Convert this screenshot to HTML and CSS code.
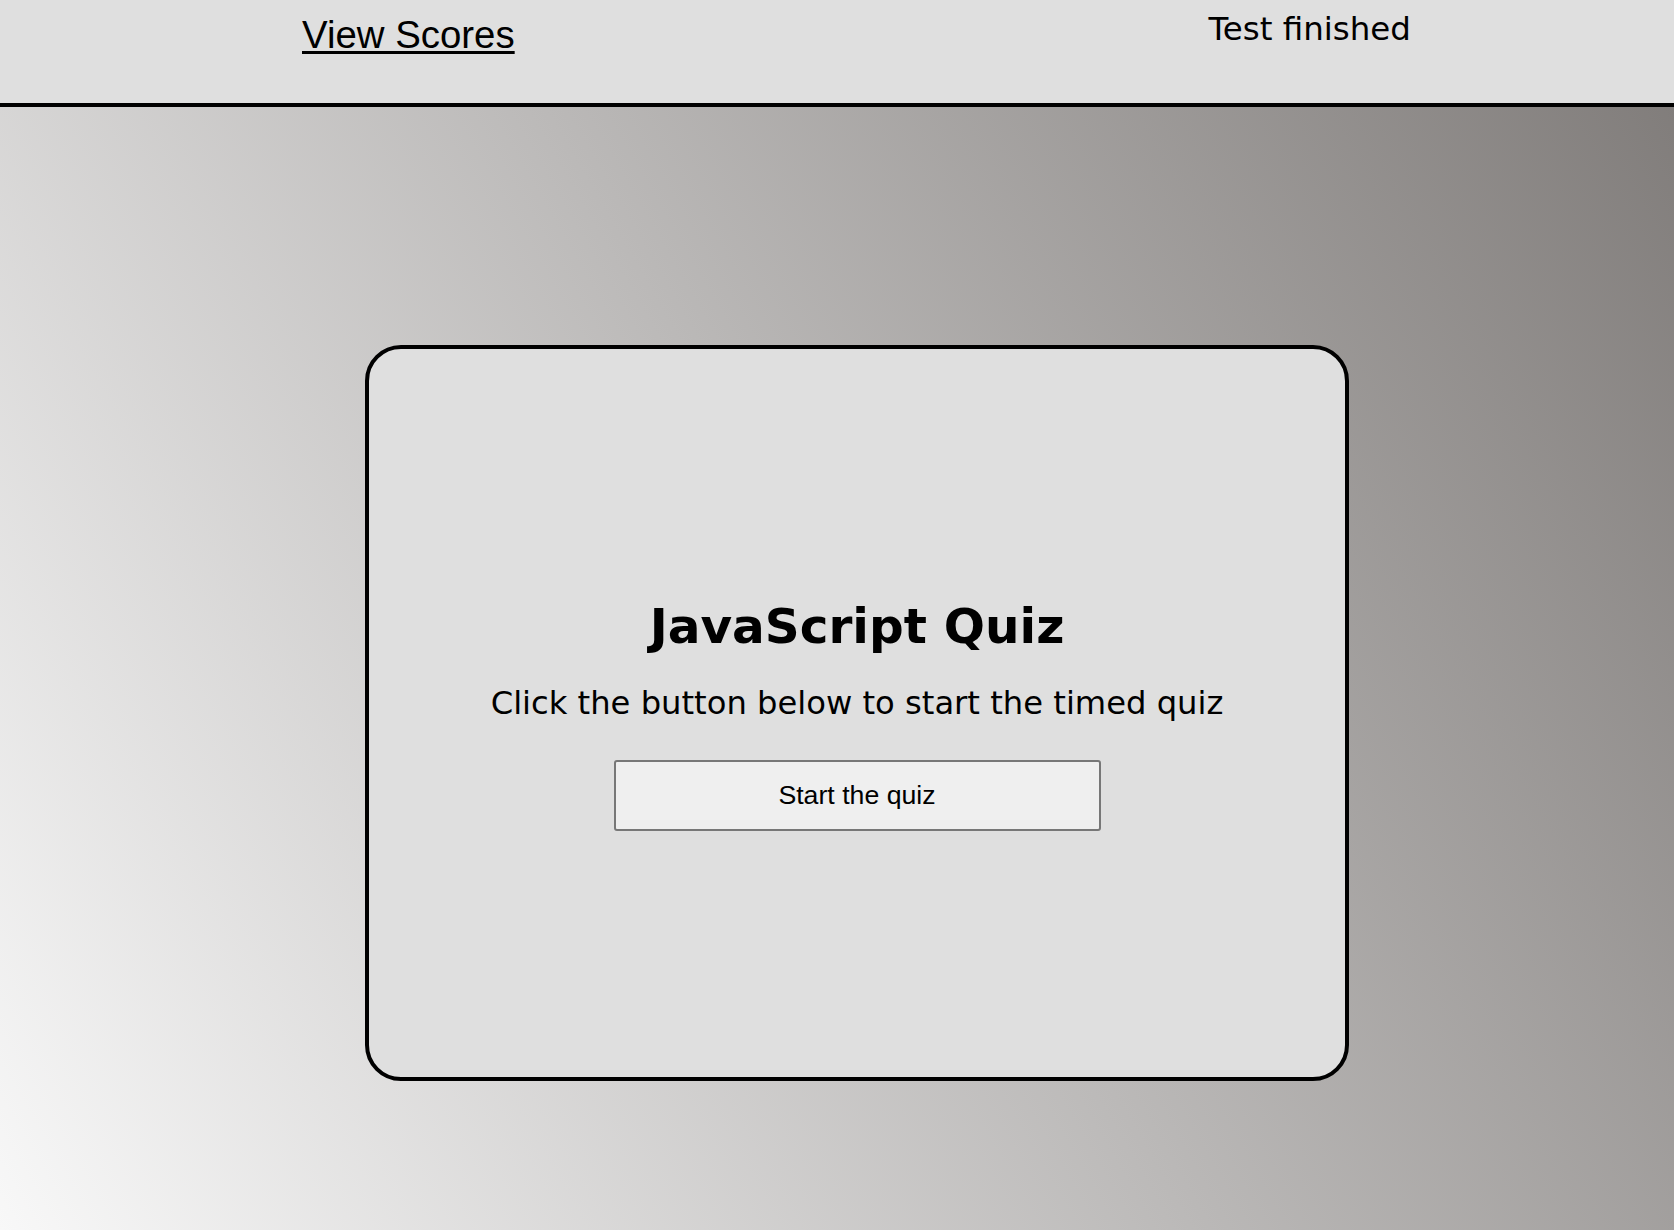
FILE: index.html
```html
<!DOCTYPE html>
<html lang="en">
<head>
<meta charset="utf-8">
<title>JavaScript Quiz</title>
<link rel="stylesheet" href="styles.css">
</head>
<body>
<header class="top-bar">
  <a class="scores-link" href="#">View Scores</a>
  <div class="timer">Test finished</div>
</header>
<main class="stage">
  <section class="quiz-card">
    <h1 class="quiz-title">JavaScript Quiz</h1>
    <p class="quiz-intro">Click the button below to start the timed quiz</p>
    <button class="start-btn" type="button">Start the quiz</button>
  </section>
</main>
</body>
</html>
```

FILE: styles.css
```css
html, body {
  margin: 0;
  padding: 0;
}

body {
  min-height: 100vh;
  background: linear-gradient(60deg, #f8f8f8 0%, #7e7a78 100%);
  font-family: "DejaVu Sans", Verdana, sans-serif;
  color: #000;
}

.top-bar {
  display: flex;
  align-items: flex-start;
  height: 103px;
  background: #dfdfdf;
  border-bottom: 4px solid #000;
}

.scores-link {
  margin-left: 302px;
  margin-top: 13px;
  font-family: "Liberation Sans", Arial, sans-serif;
  font-size: 38.4px;
  line-height: 43px;
  color: #000;
  text-decoration: underline;
  text-underline-offset: 3px;
}

.timer {
  margin-left: auto;
  margin-right: 263px;
  margin-top: 10px;
  font-family: "DejaVu Sans", Verdana, sans-serif;
  font-size: 32.5px;
  line-height: 38px;
}

.stage {
  padding: 238px 0 0 365px;
}

.quiz-card {
  box-sizing: border-box;
  width: 984px;
  height: 736px;
  padding-top: 249px;
  background: #dfdfdf;
  border: 4px solid #000;
  border-radius: 36px;
  display: flex;
  flex-direction: column;
  align-items: center;
}

.quiz-title {
  margin: 0;
  font-size: 48.5px;
  line-height: 56px;
  font-weight: bold;
}

.quiz-intro {
  margin: 31px 0 0;
  font-size: 32.2px;
  line-height: 37px;
}

.start-btn {
  box-sizing: border-box;
  margin-top: 38px;
  width: 487px;
  height: 71px;
  background: #efefef;
  border: 2px solid #777;
  border-radius: 3px;
  font-family: "Liberation Sans", Arial, sans-serif;
  font-size: 26.7px;
  color: #000;
}
```
